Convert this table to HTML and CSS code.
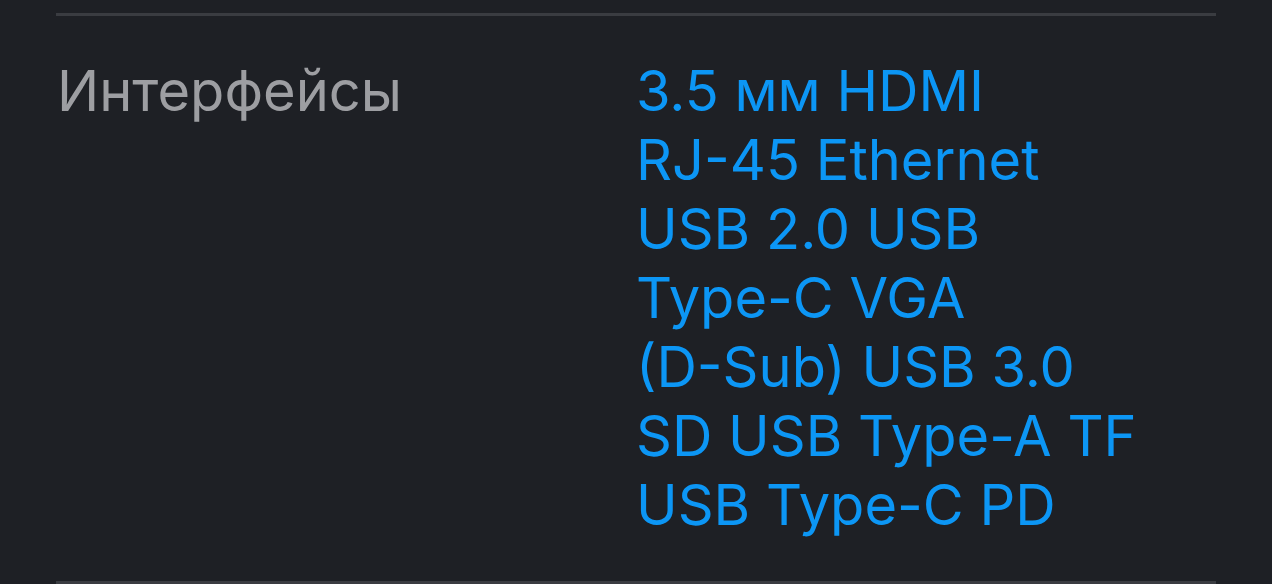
FILE: index.html
```html
<!DOCTYPE html>
<html lang="ru">
<head>
    <meta charset="UTF-8">
    <meta name="viewport" content="width=device-width, initial-scale=1.0">
    <title>Характеристики</title>
    <link rel="stylesheet" href="styles.css">
</head>
<body>
    <div class="specs">
        <div class="spec-row">
            <div class="spec-name">Интерфейсы</div>
            <div class="spec-value">
                3.5 мм HDMI<br>
                RJ-45 Ethernet<br>
                USB 2.0 USB<br>
                Type-C VGA<br>
                (D-Sub) USB 3.0<br>
                SD USB Type-A TF<br>
                USB Type-C PD
            </div>
        </div>
    </div>
</body>
</html>
```

FILE: styles.css
```css
body {
    margin: 0;
    padding: 0;
    background-color: #1e2025;
    font-family: Inter, "Noto Sans", sans-serif;
    overflow: hidden;
}

.specs {
    padding: 13px 56px 0;
}

.spec-row {
    display: flex;
    border-top: 3px solid #3a3c41;
    border-bottom: 3px solid #3a3c41;
    padding: 41px 0 41px;
}

.spec-name {
    width: 579px;
    flex-shrink: 0;
    padding-left: 1px;
    font-size: 56px;
    line-height: 69px;
    color: #9d9ea2;
}

.spec-value {
    font-size: 56px;
    line-height: 69px;
    color: #0c96f5;
}
```
